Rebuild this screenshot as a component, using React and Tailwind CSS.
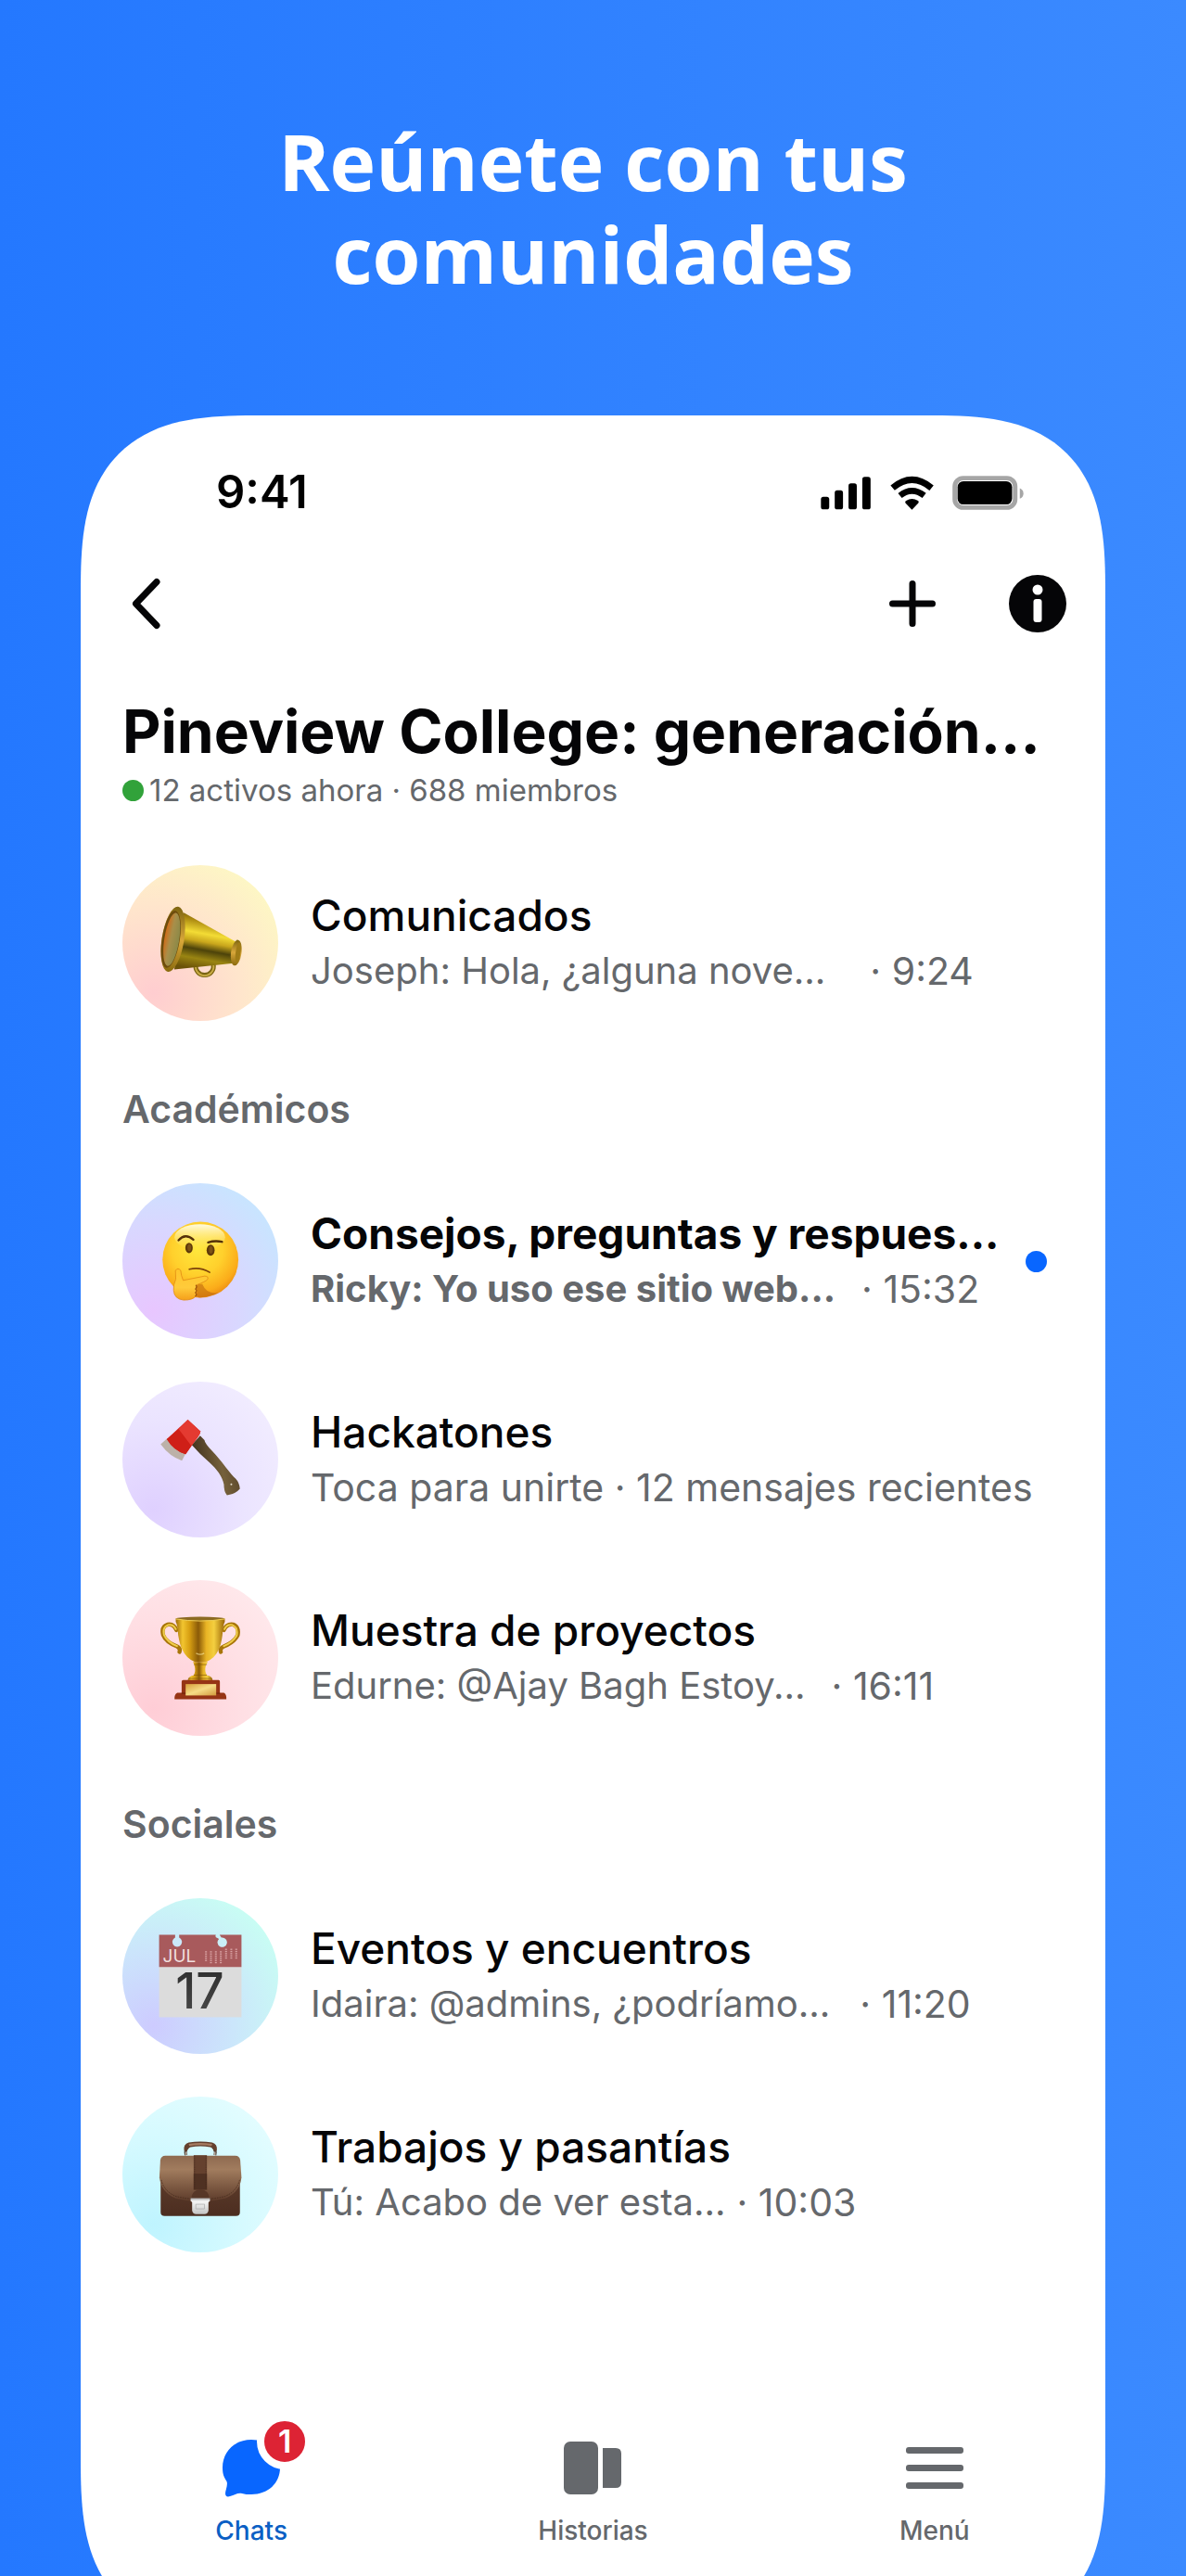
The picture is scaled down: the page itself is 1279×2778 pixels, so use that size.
import React from "react";

function Megaphone() {
  return (
    <svg viewBox="37 36 505 505" className="size-full" aria-hidden="true">
      <defs>
        <linearGradient id="mg-body" x1="0.6" y1="0" x2="0.4" y2="1">
          <stop offset="0" stopColor="#5a4a0c" />
          <stop offset="0.16" stopColor="#a8860f" />
          <stop offset="0.38" stopColor="#f3dc35" />
          <stop offset="0.52" stopColor="#c9a61c" />
          <stop offset="0.66" stopColor="#4d430a" />
          <stop offset="0.82" stopColor="#9a8512" />
          <stop offset="1" stopColor="#6b5208" />
        </linearGradient>
        <linearGradient id="mg-rim" x1="0" y1="0" x2="0" y2="1">
          <stop offset="0" stopColor="#7d650f" />
          <stop offset="0.5" stopColor="#d9a73a" />
          <stop offset="1" stopColor="#8a6a0d" />
        </linearGradient>
        <linearGradient id="mg-in" x1="0" y1="0" x2="1" y2="0.2">
          <stop offset="0" stopColor="#d9660f" />
          <stop offset="0.5" stopColor="#a88f4a" />
          <stop offset="1" stopColor="#8e8a48" />
        </linearGradient>
      </defs>
      <path d="M275 358a29 29 0 1 0 57 0" fill="none" stroke="#7a6412" strokeWidth="15" />
      <path d="M275 360a29 29 0 1 0 57 0" fill="none" stroke="#c9ac45" strokeWidth="6" />
      <path d="M236 190 L404 284 Q411 320 398 354 L205 374 Z" fill="url(#mg-body)" />
      <ellipse cx="406" cy="320" rx="17" ry="42" transform="rotate(8 406 320)" fill="url(#mg-rim)" />
      <ellipse cx="412" cy="320" rx="8" ry="34" transform="rotate(8 412 320)" fill="#a07c16" />
      <ellipse cx="201" cy="276" rx="36" ry="107" transform="rotate(9 201 276)" fill="url(#mg-rim)" />
      <ellipse cx="194" cy="276" rx="29" ry="94" transform="rotate(9 194 276)" fill="#6e4d0d" />
      <ellipse cx="197" cy="277" rx="24" ry="87" transform="rotate(9 197 277)" fill="url(#mg-in)" />
    </svg>
  );
}

function Thinking() {
  return (
    <svg viewBox="37 33 505 505" className="size-full" aria-hidden="true">
      <defs>
        <radialGradient id="th-face" cx="0.46" cy="0.36" r="0.68">
          <stop offset="0" stopColor="#ffe83d" />
          <stop offset="0.5" stopColor="#ffd02c" />
          <stop offset="0.82" stopColor="#fbac1a" />
          <stop offset="1" stopColor="#e88410" />
        </radialGradient>
        <linearGradient id="th-hi" x1="0" y1="0" x2="0" y2="1">
          <stop offset="0" stopColor="#fffbe0" />
          <stop offset="1" stopColor="#ffef70" stopOpacity="0" />
        </linearGradient>
        <linearGradient id="th-hand" x1="0" y1="0" x2="0" y2="1">
          <stop offset="0" stopColor="#ffc52b" />
          <stop offset="0.6" stopColor="#ffcb3b" />
          <stop offset="1" stopColor="#f59f1a" />
        </linearGradient>
      </defs>
      <circle cx="290" cy="281" r="123" fill="url(#th-face)" />
      <ellipse cx="288" cy="208" rx="82" ry="42" fill="url(#th-hi)" />
      <path d="M219 218 Q241 193 267 216" fill="none" stroke="#553108" strokeWidth="7" strokeLinecap="round" />
      <path d="M315 225 Q337 218 360 223" fill="none" stroke="#553108" strokeWidth="7" strokeLinecap="round" />
      <ellipse cx="253" cy="243" rx="12" ry="17" fill="#5f3a0a" />
      <ellipse cx="323" cy="250" rx="13" ry="18" fill="#5f3a0a" />
      <ellipse cx="254" cy="242" rx="6" ry="11" fill="#7c5216" />
      <ellipse cx="324" cy="249" rx="6" ry="12" fill="#7c5216" />
      <path d="M254 312 Q288 303 320 322" fill="none" stroke="#7d430a" strokeWidth="5" strokeLinecap="round" />
      <path
        d="M274 360 L281 364 L275 375 L281 384 L275 393 Q277 402 286 404 Q320 403 350 388 Q310 395 296 360 Z"
        fill="#b9630c"
        opacity="0.55"
      />
      <path
        d="M209 316 Q217 305 226 316 Q227 332 234 348 L304 334 Q318 335 313 345 Q306 352 279 362 L276 398 Q266 412 236 412 Q205 409 203 380 Q201 364 210 344 Z"
        fill="url(#th-hand)"
        stroke="#e28d14"
        strokeWidth="2.5"
      />
      <path d="M275 363 Q281 369 274 376 Q281 382 274 388 Q280 394 273 400" fill="none" stroke="#a2560c" strokeWidth="4" />
    </svg>
  );
}

function Axe() {
  return (
    <svg viewBox="37 29 505 505" className="size-full" aria-hidden="true">
      <defs>
        <linearGradient id="ax-handle" x1="0" y1="0.5" x2="1" y2="0.3">
          <stop offset="0" stopColor="#3d2e1b" />
          <stop offset="0.6" stopColor="#75603b" />
          <stop offset="1" stopColor="#57442a" />
        </linearGradient>
      </defs>
      <path
        d="M262 234 L289 204 L303 218 Q304 228 328 254 C362 290 374 312 398 338 Q416 352 418 376 Q402 394 376 397 Q366 386 366 362 C360 334 344 314 318 290 Q290 266 262 234Z"
        fill="url(#ax-handle)"
      />
      <path d="M161 232 L182 213 L242 262 L230 285 Q190 272 161 232Z" fill="#bcb1a8" />
      <path d="M249 152 L289 189 Q292 194 280 211 L242 264 Q203 252 181 215 Z" fill="#d3241c" />
      <path d="M249 152 L289 189 Q292 194 280 211 L260 237 L219 183 Z" fill="#e43a31" />
      <path d="M219 183 L260 237 L242 264 Q203 252 181 215Z" fill="#cf1f17" />
      <circle cx="390" cy="362" r="3" fill="#e5ddd0" />
    </svg>
  );
}

function Trophy() {
  return (
    <svg viewBox="37 25 505 505" className="size-full" aria-hidden="true">
      <defs>
        <linearGradient id="tr-cup" x1="0" y1="0" x2="1" y2="0">
          <stop offset="0" stopColor="#a06c08" />
          <stop offset="0.14" stopColor="#f2c52f" />
          <stop offset="0.28" stopColor="#d79f12" />
          <stop offset="0.46" stopColor="#8a5a08" />
          <stop offset="0.62" stopColor="#e8b324" />
          <stop offset="0.78" stopColor="#f4cf3f" />
          <stop offset="1" stopColor="#9a6507" />
        </linearGradient>
        <linearGradient id="tr-plate" x1="0" y1="0" x2="1" y2="1">
          <stop offset="0" stopColor="#d79f3a" />
          <stop offset="0.5" stopColor="#f6dc86" />
          <stop offset="1" stopColor="#d29a3c" />
        </linearGradient>
      </defs>
      <path
        d="M212 187 Q204 166 184 169 Q162 176 169 203 Q178 226 214 240 Q226 246 222 258 M366 187 Q374 166 396 169 Q416 176 411 203 Q400 226 366 240 Q352 246 356 258"
        fill="none"
        stroke="#a87509"
        strokeWidth="13"
        strokeLinecap="round"
      />
      <path
        d="M210 184 Q202 167 184 171 Q166 178 172 203 Q182 225 214 239 M368 184 Q376 167 394 171 Q412 178 408 203 Q398 225 366 239"
        fill="none"
        stroke="#f0cd4a"
        strokeWidth="6"
        strokeLinecap="round"
      />
      <path d="M248 352 Q252 336 268 334 Q276 320 270 300 L266 290 H314 L308 300 Q302 320 311 334 Q328 336 330 352Z" fill="url(#tr-cup)" />
      <path d="M250 344 H328 M268 333 H311 M269 299 H311" stroke="#7b5006" strokeWidth="3" opacity="0.6" />
      <path d="M210 150 H369 V160 Q363 170 361 204 Q353 274 308 290 H272 Q228 274 218 204 Q216 170 210 160Z" fill="url(#tr-cup)" />
      <ellipse cx="289" cy="150" rx="79" ry="6" fill="#8c6a22" />
      <path d="M210 151 Q289 164 369 151" fill="none" stroke="#f0cf55" strokeWidth="3" />
      <path d="M276 262 Q289 270 302 262" fill="none" stroke="#fff0a8" strokeWidth="4" opacity="0.6" />
      <path d="M234 349 H349 Q353 349 353 354 V390 H366 Q375 394 374 411 H206 Q205 394 215 390 H229 V354 Q229 349 234 349Z" fill="#963414" />
      <path d="M229 392 H353" stroke="#6a1f0a" strokeWidth="3" />
      <rect x="242" y="362" width="99" height="37" fill="url(#tr-plate)" />
    </svg>
  );
}

function CalendarPage() {
  const columns = [
    [308, 5],
    [324, 6],
    [340, 6],
    [356, 6],
    [373, 5],
    [390, 5],
    [406, 5],
  ];
  return (
    <svg viewBox="37 36 505 505" className="size-full" aria-hidden="true">
      <defs>
        <linearGradient id="cal-num" x1="0" y1="0" x2="0" y2="1">
          <stop offset="0" stopColor="#2a2a2a" />
          <stop offset="1" stopColor="#4c4c4c" />
        </linearGradient>
      </defs>
      <rect x="156" y="258" width="267" height="164" fill="#dcdcdc" />
      <path
        d="M156 155 H208 V164 A15.500 15.500 0 1 0 221 164 V155 H340 Q336 162 345 165 L350 168 A15.500 15.500 0 1 0 358 164 L352 155 H423 V259 H156Z"
        fill="#a85a5c"
      />
      {columns.map(([x, n]) =>
        Array.from({ length: n }, (_, i) => (
          <rect key={x + "-" + i} x={x - 3} y={(n === 5 && x > 360 ? 200 : 208) + i * 7} width="6" height="4" fill="#d9a3a4" />
        ))
      )}
      <text x="168" y="244" fontFamily="Inter, sans-serif" fontSize="57" fill="#f0dede">
        JUL
      </text>
      <text x="288" y="394" textAnchor="middle" fontFamily="Inter, sans-serif" fontSize="160" fontWeight="500" fill="url(#cal-num)">
        17
      </text>
    </svg>
  );
}

function Briefcase() {
  return (
    <svg viewBox="37 30 505 505" className="size-full" aria-hidden="true">
      <defs>
        <linearGradient id="bc-body" x1="0" y1="0" x2="0" y2="1">
          <stop offset="0" stopColor="#5e3c2b" />
          <stop offset="1" stopColor="#4b2d20" />
        </linearGradient>
        <linearGradient id="bc-flap" x1="0" y1="0" x2="0" y2="1">
          <stop offset="0" stopColor="#8e6a50" />
          <stop offset="0.3" stopColor="#a17c5e" />
          <stop offset="1" stopColor="#5d3b2a" />
        </linearGradient>
        <linearGradient id="bc-lock" x1="0" y1="0" x2="0" y2="1">
          <stop offset="0" stopColor="#a8a8a8" />
          <stop offset="0.2" stopColor="#f6f6f6" />
          <stop offset="1" stopColor="#c4c4c4" />
        </linearGradient>
      </defs>
      <path d="M243 220 Q238 202 250 194 M337 220 Q342 202 330 194" fill="none" stroke="#4a3a30" strokeWidth="9" />
      <path d="M243 219 V209 M337 219 V209" stroke="#c5b9ac" strokeWidth="4" />
      <path d="M237 205 Q234 184 252 179 Q290 173 328 179 Q346 184 343 205 L333 207 Q332 197 322 194 Q290 188 258 194 Q248 197 247 207Z" fill="#64402e" />
      <path d="M252 183 Q290 177 328 183 L326 190 Q290 184 254 190Z" fill="#a57b61" />
      <path d="M161 290 H418 V405 Q418 417 405 417 H174 Q161 417 161 405Z" fill="url(#bc-body)" />
      <path d="M176 222 H404 Q416 222 419 236 L423 292 Q418 340 370 360 Q330 370 290 370 Q250 370 210 360 Q163 340 157 292 L160 236 Q163 222 176 222Z" fill="url(#bc-flap)" />
      <path d="M163 300 Q172 338 212 354 Q250 363 290 363 Q330 363 368 354 Q408 338 417 300" fill="none" stroke="#3f251a" strokeWidth="2" strokeDasharray="5 3" />
      <rect x="268" y="220" width="43" height="112" fill="#65412e" />
      <rect x="268" y="280" width="43" height="52" fill="#4f3122" />
      <path d="M271 222 V328 M308 222 V328" stroke="#3c2419" strokeWidth="1.500" strokeDasharray="4 3" />
      <path d="M261 360 Q262 332 290 331 Q318 332 318 360Z" fill="#573727" />
      <path d="M258 359 H321 V368 L316 373 V400 Q314 411 303 411 H276 Q265 411 263 400 V373 L258 368Z" fill="url(#bc-lock)" />
      <path d="M275 379 H303 V394 H275Z" fill="none" stroke="#a8a8a8" strokeWidth="2" />
    </svg>
  );
}

const announcements = [
  {
    title: "Comunicados",
    preview: "Joseph: Hola, ¿alguna nove...",
    time: "· 9:24",
    gap: "gap-12",
    Icon: Megaphone,
    tint: "bg-[radial-gradient(circle_at_20%_82%,#ffcdd0_0%,#ffe6cc_50%,#fdf8c4_85%)]",
  },
];

const academic = [
  {
    title: "Consejos, preguntas y respues...",
    preview: "Ricky: Yo uso ese sitio web...",
    time: "· 15:32",
    gap: "gap-7",
    unread: true,
    Icon: Thinking,
    tint: "bg-[radial-gradient(circle_at_20%_82%,#e8c6ff_0%,#d8d8ff_50%,#c4e8ff_90%)]",
  },
  {
    title: "Hackatones",
    preview: "Toca para unirte · 12 mensajes recientes",
    Icon: Axe,
    tint: "bg-[radial-gradient(circle_at_20%_82%,#dfd0ff_0%,#ebe4ff_50%,#f4f0ff_100%)]",
  },
  {
    title: "Muestra de proyectos",
    preview: "Edurne: @Ajay Bagh Estoy...",
    time: "· 16:11",
    gap: "gap-7",
    Icon: Trophy,
    tint: "bg-[radial-gradient(circle_at_20%_82%,#ffcdd6_0%,#ffdfe4_50%,#ffedef_100%)]",
  },
];

const social = [
  {
    title: "Eventos y encuentros",
    preview: "Idaira: @admins, ¿podríamo...",
    time: "· 11:20",
    gap: "gap-8",
    Icon: CalendarPage,
    tint: "bg-[radial-gradient(circle_at_20%_82%,#cdcbff_0%,#cbe6fb_45%,#c8fff3_85%)]",
  },
  {
    title: "Trabajos y pasantías",
    preview: "Tú: Acabo de ver esta...",
    time: "· 10:03",
    gap: "gap-3",
    Icon: Briefcase,
    tint: "bg-[radial-gradient(circle_at_20%_82%,#bff4ff_0%,#d6faff_50%,#e9feff_100%)]",
  },
];

function ChatRow({ title, preview, time, gap, unread, Icon, tint }) {
  return (
    <li>
      <a href="#chat" className="flex items-center gap-[35px]">
        <span className={"size-[168px] shrink-0 overflow-hidden rounded-full " + tint}>
          <Icon />
        </span>
        <span className="flex min-w-0 flex-1 flex-col whitespace-nowrap">
          <span className={"text-[46px] leading-[60px] text-[#050507] " + (unread ? "font-bold" : "font-medium")}>{title}</span>
          <span className={"flex text-[#65686c] leading-[60px] " + (gap || "")}>
            <span className={(time ? "text-[40px] " : "text-[41px] ") + (unread ? "font-bold" : "")}>{preview}</span>
            {time && <span className="text-[41px]">{time}</span>}
          </span>
        </span>
        {unread && <span role="img" aria-label="No leído" className="mr-[63px] size-[23px] shrink-0 rounded-full bg-[#0866ff]" />}
      </a>
    </li>
  );
}

function ChatList({ rows }) {
  return (
    <ul className="flex flex-col gap-[46px]">
      {rows.map((row) => (
        <ChatRow key={row.title} {...row} />
      ))}
    </ul>
  );
}

function Section({ heading, rows }) {
  return (
    <section>
      <h3 className="pt-[70px] pb-[55px] text-[41px] leading-[50px] font-semibold text-[#65686c]">{heading}</h3>
      <ChatList rows={rows} />
    </section>
  );
}

function StatusBar() {
  return (
    <div className="flex items-center justify-between pt-[54px] pr-[87px] pl-[146px] text-black">
      <span className="text-[49px] leading-[58px] font-semibold">9:41</span>
      <svg viewBox="71 68 663 112" className="h-[37px] w-[221px]" aria-hidden="true">
        <g fill="#000">
          <rect x="72" y="137" width="27" height="41" rx="8" />
          <rect x="117" y="116" width="27" height="62" rx="8" />
          <rect x="162" y="93" width="27" height="85" rx="8" />
          <rect x="207" y="72" width="27" height="106" rx="8" />
          <path d="M369 179 L348 157 Q345 153 350 150 Q369 138 389 150 Q393 153 390 157Z" />
        </g>
        <path d="M306 108 Q369 55 433 108" fill="none" stroke="#000" strokeWidth="21" />
        <path d="M330 133 Q369 102 409 133" fill="none" stroke="#000" strokeWidth="20" />
        <rect x="509" y="76" width="197" height="96" rx="27" fill="none" stroke="#a6a6a6" strokeWidth="15" />
        <rect x="518" y="86" width="178" height="76" rx="19" fill="#000" />
        <path d="M721 109 Q733 114 733 126 Q733 138 721 143Z" fill="#a6a6a6" />
      </svg>
    </div>
  );
}

function Toolbar() {
  return (
    <div className="flex items-center pt-[60px] pr-[42px] pl-[51px]">
      <button type="button" aria-label="Atrás" className="flex h-[62px] w-[38px] items-center">
        <svg viewBox="0 0 38 62" className="h-[62px] w-[38px]" fill="none" stroke="#050507" strokeWidth="7" strokeLinecap="round" strokeLinejoin="round" aria-hidden="true">
          <path d="M31 7.500 L8.500 31 L31 54.500" />
        </svg>
      </button>
      <button type="button" aria-label="Añadir" className="ml-auto">
        <svg viewBox="0 0 52 52" className="size-[52px]" stroke="#050507" strokeWidth="7" strokeLinecap="round" aria-hidden="true">
          <path d="M26 4.500 V47.500 M4.500 26 H47.500" />
        </svg>
      </button>
      <button type="button" aria-label="Información" className="ml-[78px]">
        <svg viewBox="0 0 62 62" className="size-[62px]" aria-hidden="true">
          <circle cx="31" cy="31" r="31" fill="#050507" />
          <circle cx="31" cy="16" r="5.500" fill="#fff" />
          <rect x="26.500" y="26" width="9" height="25" rx="3" fill="#fff" />
        </svg>
      </button>
    </div>
  );
}

function TabBar() {
  return (
    <nav className="mt-auto grid grid-cols-3 pb-[94px] text-[28px] leading-[40px] font-medium text-[#65686c]">
      <a href="#chats" className="flex flex-col items-center gap-4 text-[#0a5fc4]">
        <span className="relative">
          <svg viewBox="0 0 62 62" className="size-[62px]" aria-hidden="true">
            <path
              d="M31 0 C13 0 0 13 0 30 C0 38 2 41 4.500 45 C6 49 3 55 3 58 C3 61 5 62 8 61 C14 59 17 57 21 58 C24 59 27 59 31 59 C49 59 62 47 62 30 C62 13 49 0 31 0Z"
              fill="#0866ff"
            />
          </svg>
          <span className="absolute -top-[28px] left-[37px] flex size-[60px] items-center justify-center rounded-full border-8 border-white bg-[#dd2334] text-[34px] leading-none font-semibold text-white">
            1
          </span>
        </span>
        Chats
      </a>
      <a href="#historias" className="flex flex-col items-center gap-4">
        <svg viewBox="0 0 62 62" className="size-[62px]" fill="#65686c" aria-hidden="true">
          <rect x="0" y="2" width="37" height="57" rx="7" />
          <path d="M42 9 H56 Q62 9 62 15 V46 Q62 52 56 52 H42Z" />
        </svg>
        Historias
      </a>
      <a href="#menu" className="flex flex-col items-center gap-4">
        <svg viewBox="0 0 62 62" className="size-[62px]" fill="#65686c" aria-hidden="true">
          <rect x="0" y="8" width="62" height="7" rx="3" />
          <rect x="0" y="27" width="62" height="7" rx="3" />
          <rect x="0" y="46" width="62" height="7" rx="3" />
        </svg>
        Menú
      </a>
    </nav>
  );
}

export default function App() {
  return (
    <div className="flex min-h-screen flex-col overflow-hidden bg-linear-to-r from-[#2478ff] to-[#3b8aff] px-[87px] font-['Inter',sans-serif]">
      <h1 className="pt-[124px] pb-[124px] text-center font-['Open_Sans',sans-serif] text-[84px] leading-[100px] font-bold text-white">
        Reúnete con tus
        <br />
        comunidades
      </h1>
      <main className="-mb-[65px] flex flex-1 flex-col rounded-[144px] bg-white supports-[corner-shape:squircle]:rounded-[190px] supports-[corner-shape:squircle]:[corner-shape:superellipse(1.5)]">
        <StatusBar />
        <Toolbar />
        <div className="pl-[45px]">
          <h2 className="pt-[69px] text-[64px] leading-[76px] font-bold whitespace-nowrap text-[#050507]">Pineview College: generación...</h2>
          <p className="flex items-center gap-[6px] pb-[56px] text-[33px] leading-[50px] text-[#65686c]">
            <span className="size-[23px] rounded-full bg-[#31a23a]" />
            12 activos ahora · 688 miembros
          </p>
          <ChatList rows={announcements} />
          <Section heading="Académicos" rows={academic} />
          <Section heading="Sociales" rows={social} />
        </div>
        <TabBar />
      </main>
    </div>
  );
}
